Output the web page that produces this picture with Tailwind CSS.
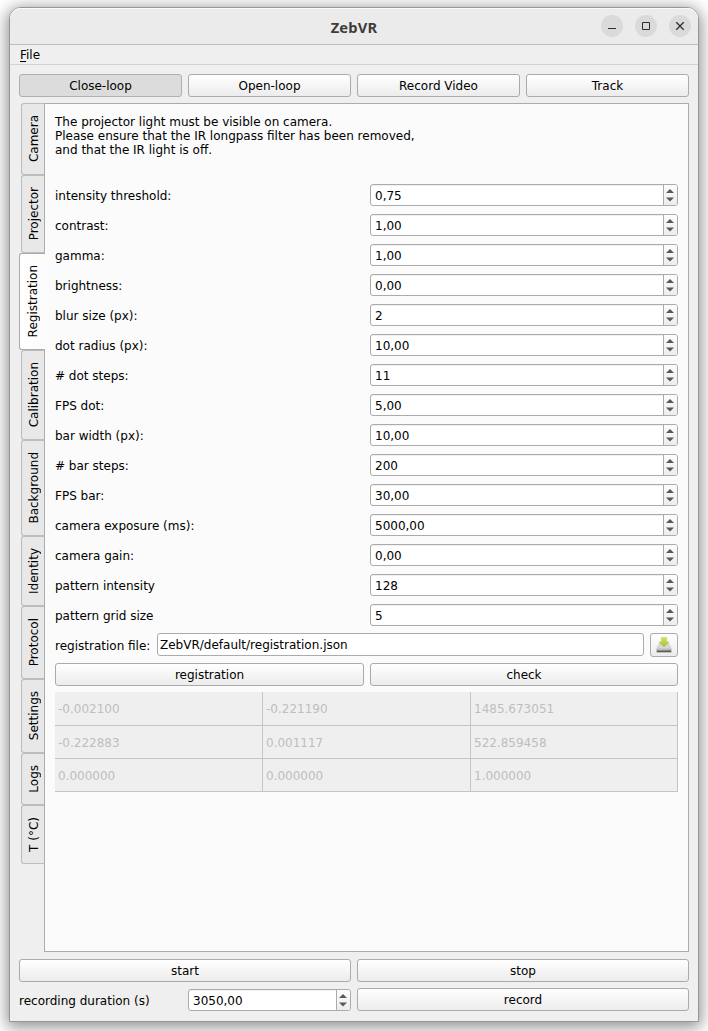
<!DOCTYPE html>
<html lang="en">
<head>
<meta charset="utf-8">
<title>ZebVR</title>
<script src="https://cdn.jsdelivr.net/npm/@tailwindcss/browser@4"></script>
</head>
<body class="h-[1031px] w-[708px] overflow-hidden bg-white font-['DejaVu_Sans',sans-serif] text-[12px] leading-[14px] text-black">
<div class="h-full pt-[7px] pl-[9px]">
<div class="flex h-[1015px] w-[690px] flex-col rounded-t-[12px] border border-[#969696] bg-[#efefef] shadow-[0_3px_16px_2px_rgba(0,0,0,0.45)]">
  <header class="flex h-[37px] shrink-0 items-center rounded-t-[11px] border-b border-[#bdbdbd] bg-[#ebebeb] pr-[7px] shadow-[inset_0_1px_0_#fafafa]">
    <h1 class="flex-1 pt-px pl-[97px] text-center font-['Noto_Sans',sans-serif] text-[14.7px] leading-4 font-bold tracking-[0.2px] text-[#3d3d3d]">ZebVR</h1>
    <div class="flex gap-3">
      <svg class="size-[22px]" viewBox="0 0 22 22"><circle cx="11" cy="11" r="11" fill="#dadada"/><path d="M7 13.5h8" stroke="#2e2e2e"/></svg>
      <svg class="size-[22px]" viewBox="0 0 22 22"><circle cx="11" cy="11" r="11" fill="#dadada"/><path d="M7.5 7.5h7v7h-7z" fill="none" stroke="#2e2e2e"/></svg>
      <svg class="size-[22px]" viewBox="0 0 22 22"><circle cx="11" cy="11" r="11" fill="#dadada"/><path d="M7.3 7.3l7.4 7.4M14.7 7.3l-7.4 7.4" stroke="#2e2e2e" stroke-width="1.3"/></svg>
    </div>
  </header>
  <nav class="h-5 shrink-0 border-b border-[#d3d3d3] pt-[3px] pl-[10px]"><span class="underline underline-offset-2">F</span>ile</nav>
  <main class="flex flex-1 flex-col px-[9px] pt-[9px]">
    <div class="grid h-[23px] grid-cols-4 gap-1.5">
      <button class="rounded-[3px] border border-[#b0b0b0] bg-[#dcdcdc]">Close-loop</button>
      <button class="rounded-[3px] border border-[#ababab] bg-linear-to-b from-white to-[#ececec]">Open-loop</button>
      <button class="rounded-[3px] border border-[#ababab] bg-linear-to-b from-white to-[#ececec]">Record Video</button>
      <button class="rounded-[3px] border border-[#ababab] bg-linear-to-b from-white to-[#ececec]">Track</button>
    </div>
    <div class="mt-1.5 flex h-[849px]">
      <div id="tabs" class="z-10 -mr-0.5 flex w-[27px] flex-col items-start"></div>
      <section class="flex-1 border border-[#ababab] bg-[#fbfbfb] px-[10px] pt-[11px]">
        <p>The projector light must be visible on camera.<br>Please ensure that the IR longpass filter has been removed,<br>and that the IR light is off.</p>
        <div id="rows" class="mt-[27px] flex flex-col gap-2"></div>
        <div class="mt-[7px] flex h-6 items-start">
          <span class="w-[102px] pt-[6px]">registration file:</span>
          <div class="mr-1.5 h-[23px] flex-1 rounded-[3px] border border-[#ababab] bg-white pt-[4px] pl-[2px]">ZebVR/default/registration.json</div>
          <button class="flex h-6 w-7 items-center justify-center rounded-[3px] border border-[#ababab] bg-linear-to-b from-white to-[#ececec]">
            <svg class="size-4" viewBox="0 0 16 16">
              <defs><linearGradient id="disk" x1="0" y1="0" x2="0" y2="1"><stop offset="0" stop-color="#ededed"/><stop offset="1" stop-color="#a8a8a8"/></linearGradient><linearGradient id="arrow" x1="0" y1="0" x2="0" y2="1"><stop offset="0" stop-color="#d5e560"/><stop offset="1" stop-color="#9fc425"/></linearGradient></defs>
              <path d="M3.500 4h9l3.200 8.500v2.500q0 .6-.8.6H1.100q-.8 0-.8-.6v-2.500z" fill="url(#disk)"/>
              <path d="M1.300 11.500L4 6h8l2.700 5.500z" fill="#d6d6d6"/>
              <path d="M1 13.500h14v1.600h-14z" fill="#5a5a5a"/><path d="M1.500 13.500h8" stroke="#999" stroke-width=".7"/>
              <path d="M5.500.5h5v4.500h2.500L8 10 3 5h2.500z" fill="url(#arrow)" stroke="#b3c94a" stroke-width=".5"/>
            </svg>
          </button>
        </div>
        <div class="mt-1.5 flex h-[23px] gap-1.5">
          <button class="w-[309px] rounded-[3px] border border-[#ababab] bg-linear-to-b from-white to-[#ececec]">registration</button>
          <button class="w-[308px] rounded-[3px] border border-[#ababab] bg-linear-to-b from-white to-[#ececec]">check</button>
        </div>
        <div id="matrix" class="mt-1.5 grid h-[100px] grid-cols-[208px_208px_207px] grid-rows-[34px_33px_33px] bg-[#efefef] text-[#bebebe]"></div>
      </section>
    </div>
    <div class="mt-[7px] flex h-[23px] gap-1.5">
      <button class="flex-1 rounded-[3px] border border-[#ababab] bg-linear-to-b from-white to-[#ececec]">start</button>
      <button class="flex-1 rounded-[3px] border border-[#ababab] bg-linear-to-b from-white to-[#ececec]">stop</button>
    </div>
    <div class="mt-1.5 flex h-6">
      <span class="w-[169px] pt-[6px]">recording duration (s)</span>
      <div id="duration" class="mt-px mr-1.5 flex h-[22px] w-[163px]"></div>
      <button class="h-[23px] flex-1 rounded-[3px] border border-[#ababab] bg-linear-to-b from-white to-[#ececec]">record</button>
    </div>
  </main>
</div>
</div>
<script>
const spin = v => `<div class="flex h-[22px] w-full overflow-hidden rounded-[3px] border border-[#ababab] bg-white shadow-[inset_0_1px_0_#f0f0f0]"><span class="flex-1 pt-[4px] pl-[4px]">${v}</span><span class="w-[14px] border-l border-[#ababab] bg-linear-to-b from-[#fcfcfc] to-[#ededed]"><svg class="h-5 w-[13px]" viewBox="0 0 13 20"><path d="M2 8L6 4l4 4zM2 12.500L6 16.500l4-4z" fill="#585858"/></svg></span></div>`;
const fields = [['intensity threshold:','0,75'],['contrast:','1,00'],['gamma:','1,00'],['brightness:','0,00'],['blur size (px):','2'],['dot radius (px):','10,00'],['# dot steps:','11'],['FPS dot:','5,00'],['bar width (px):','10,00'],['# bar steps:','200'],['FPS bar:','30,00'],['camera exposure (ms):','5000,00'],['camera gain:','0,00'],['pattern intensity','128'],['pattern grid size','5']];
document.getElementById('rows').innerHTML = fields.map(([l, v]) => `<div class="flex h-[22px]"><span class="w-[315px] pt-[5px]">${l}</span><div class="w-[308px]">${spin(v)}</div></div>`).join('');
document.getElementById('duration').innerHTML = spin('3050,00');
const tabs = [['Camera',72],['Projector',78],['Registration',97],['Calibration',90],['Background',96],['Identity',70],['Protocol',73],['Settings',74],['Logs',52],['T (°C)',59]];
document.getElementById('tabs').innerHTML = tabs.map(([t, h]) => t === 'Registration'
  ? `<div class="flex w-[26px] shrink-0 items-center justify-center rounded-l-[3px] border border-r-0 border-[#ababab] bg-linear-to-r from-white to-[#fbfbfb] pl-px" style="height:${h}px"><span class="rotate-180 [writing-mode:vertical-rl]">${t}</span></div>`
  : `<div class="ml-0.5 flex w-6 shrink-0 items-center justify-center rounded-l-[3px] border border-[#bcbcbc] border-r-[#ababab] bg-[#e8e8e8] pl-[2px]" style="height:${h}px"><span class="rotate-180 [writing-mode:vertical-rl]">${t}</span></div>`).join('');
const cells = ['-0.002100','-0.221190','1485.673051','-0.222883','0.001117','522.859458','0.000000','0.000000','1.000000'];
document.getElementById('matrix').innerHTML = cells.map(c => `<div class="border-r border-b border-[#c4c4c4] pt-[10px] pl-[3px]">${c}</div>`).join('');
</script>
</body>
</html>
